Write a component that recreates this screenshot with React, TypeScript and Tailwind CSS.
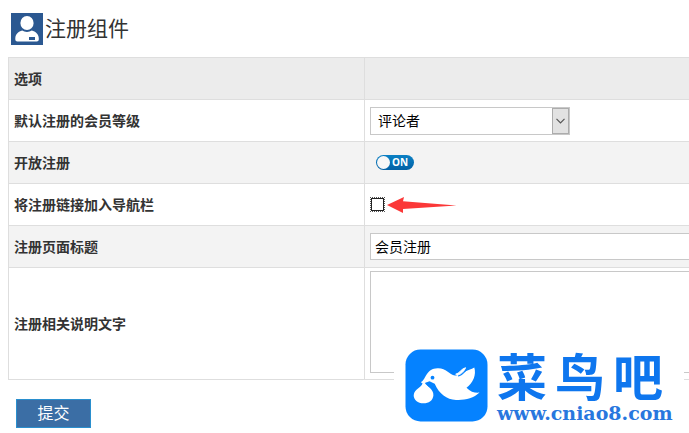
import { useState } from "react";
import type { ReactNode } from "react";

function UserIcon() {
  return (
    <svg className="size-8" viewBox="0 0 32 32" aria-hidden="true">
      <rect width="32" height="32" fill="#2b5891" />
      <ellipse cx="16" cy="10" rx="6.6" ry="7" fill="#fff" />
      <path
        d="M4.3 25.5C4.3 21 7.5 18.6 11.2 17.6C12.6 18.4 14 18.9 16 18.9C18 18.9 19.4 18.4 20.8 17.6C24.5 18.6 27.8 21 27.8 25.5V26.5Q27.8 28.5 25.8 28.5H6.3Q4.3 28.5 4.3 26.5Z"
        fill="#fff"
      />
      <rect x="18" y="24" width="6" height="3" fill="#2b5891" />
    </svg>
  );
}

function RedArrow() {
  return (
    <svg className="h-4 w-[70px]" viewBox="0 0 70 16" aria-hidden="true">
      <path d="M0 8L17 0L16 4.3L69.5 8.4L16 12L16 16Z" fill="#fb3838" />
    </svg>
  );
}

function BirdLogo() {
  return (
    <svg className="h-[73px] w-[83px] shrink-0" viewBox="0 0 83 73" aria-hidden="true">
      <rect x="0.5" y="0.5" width="82" height="72" rx="15" fill="#0582ff" />
      <path
        d="M17.5 32C21 29 21.5 19.8 32.5 19.3C41 18.9 44 25.3 50 26.6C53.5 26.8 55.5 25.2 58 23.5C62.5 21.2 66.5 20.4 69.3 18.5C71.5 25.5 68.2 34 61.5 38.7C65.5 43 70 44 74.5 43.6C68.5 49.5 59.5 51.5 51 51C41.5 50.2 34.5 45.3 29.7 34.7L24.5 32.2L20.5 33.7C21.5 37.3 28.8 40 28.4 46.2C28 51.5 23.8 54.3 18.5 54.3C12.8 54.3 8.5 50.6 8.7 46.2C9.2 39.7 16.8 38.4 17.5 34.2L15.8 33.2Z"
        fill="#fff"
      />
      <path
        d="M50.5 25.2C54.5 24.7 55.5 20.3 60.5 18.7C59.5 22 57 24.3 52 26.5"
        fill="#fff"
        stroke="#fff"
        strokeWidth="1"
        strokeLinejoin="round"
      />
      <path d="M53 27C58.5 25.8 60.5 20.5 63.8 18.6" fill="none" stroke="#0582ff" strokeWidth="1.2" />
      <path d="M20.5 34C24.5 38.2 28.5 39.4 30 42" fill="none" stroke="#0582ff" strokeWidth="1.3" />
      <circle cx="27.5" cy="28.7" r="1.9" fill="#0582ff" />
    </svg>
  );
}

function Row({ label, htmlFor, shaded, children }: {
  label: string;
  htmlFor: string;
  shaded?: boolean;
  children: ReactNode;
}) {
  return (
    <tr className={shaded ? "bg-[#f3f3f3]" : "bg-white"}>
      <th scope="row" className="h-[42px] border border-[#dedede] px-[5px] text-left font-bold">
        <label htmlFor={htmlFor}>{label}</label>
      </th>
      <td className="border border-[#dedede] px-[5px]">{children}</td>
    </tr>
  );
}

export default function App() {
  const [open, setOpen] = useState(true);
  return (
    <main className="relative overflow-hidden bg-white pt-[13px] pb-1 font-['Liberation_Sans','Noto_Sans_CJK_SC',sans-serif] text-sm leading-5 text-[#333]">
      <header className="flex h-8 items-center gap-0.5 pl-[11px]">
        <UserIcon />
        <h1 className="text-[21px] leading-8">注册组件</h1>
      </header>

      <form onSubmit={(e) => e.preventDefault()}>
        <table className="mt-3 ml-2 w-full min-w-[760px] table-fixed border-collapse">
          <colgroup>
            <col className="w-[356px]" />
            <col />
          </colgroup>
          <thead>
            <tr className="bg-[#ececec]">
              <th scope="col" className="h-[42px] border border-[#dedede] px-[5px] text-left font-bold">
                选项
              </th>
              <td className="border border-[#dedede]" />
            </tr>
          </thead>
          <tbody>
            <Row label="默认注册的会员等级" htmlFor="level">
              <div className="relative h-7 w-[200px]">
                <select
                  id="level"
                  className="size-full appearance-none rounded-none border border-[#c8c8c8] bg-white pr-6 pl-[7px] text-black"
                >
                  <option>评论者</option>
                  <option>会员</option>
                </select>
                <span className="pointer-events-none absolute inset-y-px right-px flex w-[17px] items-center justify-center border border-[#acacac] bg-[#e2e2e2]">
                  <svg className="h-[6px] w-[9px]" viewBox="0 0 9 6" aria-hidden="true">
                    <path d="M0.5 0.8L4.5 4.8L8.5 0.8" fill="none" stroke="#555" strokeWidth="1.2" />
                  </svg>
                </span>
              </div>
            </Row>
            <Row label="开放注册" htmlFor="open" shaded>
              <button
                id="open"
                type="button"
                role="switch"
                aria-checked={open}
                onClick={() => setOpen(!open)}
                className="ml-[6px] flex h-[15px] w-[38px] items-center gap-0.5 rounded-full bg-linear-to-b from-[#0b80c4] to-[#0461a5] pl-px font-['Open_Sans',sans-serif] text-[10px] leading-[15px] font-bold text-white"
              >
                <span className="size-[13px] rounded-full bg-[#f7f7f7]" />
                <span>{open ? "ON" : "OFF"}</span>
              </button>
            </Row>
            <Row label="将注册链接加入导航栏" htmlFor="nav">
              <div className="flex items-start gap-0.5">
                <span className="flex border border-dotted border-[#555]">
                  <input
                    id="nav"
                    type="checkbox"
                    className="size-[13px] appearance-none border border-[#222] bg-white checked:bg-[#3a6ea5]"
                  />
                </span>
                <RedArrow />
              </div>
            </Row>
            <Row label="注册页面标题" htmlFor="title" shaded>
              <input
                id="title"
                type="text"
                defaultValue="会员注册"
                className="block h-[27px] w-full border border-[#c8c8c8] bg-white px-1 pb-0.5 text-black"
              />
            </Row>
            <Row label="注册相关说明文字" htmlFor="description">
              <textarea
                id="description"
                className="mt-[3px] mb-[6px] block h-[102px] w-full resize-none border border-[#c8c8c8] bg-white p-1 text-black"
              />
            </Row>
          </tbody>
        </table>

        <button
          type="submit"
          className="mt-[19px] ml-4 block h-[29px] w-[75px] border border-[#2a8fce] bg-[#3b6ea5] text-base leading-7 text-white"
        >
          提交
        </button>
      </form>

      <aside className="absolute top-[344px] left-[394px] flex h-[89px] w-[290px] gap-[9px] bg-white pt-[5px] pl-[11px]">
        <BirdLogo />
        <div className="text-[#0e76ee]">
          <p className="flex gap-2 font-['Noto_Sans_CJK_SC',sans-serif] text-[50px] leading-[50px] font-bold">
            <span>菜</span>
            <span>鸟</span>
            <span>吧</span>
          </p>
          <p className="mt-1 font-['DejaVu_Serif',serif] text-[19px] leading-5 font-bold text-[#2877de]">
            www.cniao8.com
          </p>
        </div>
      </aside>
    </main>
  );
}
